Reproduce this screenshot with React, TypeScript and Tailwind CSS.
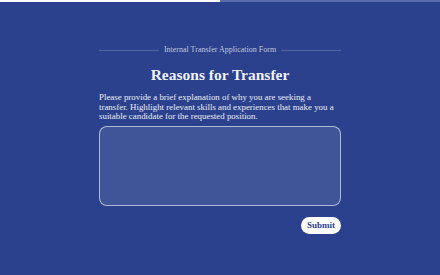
import React from "react";

const App: React.FC = () => {
  return (
    <div
      className="w-[440px] h-[275px] bg-[#2b418d] text-white overflow-hidden"
      style={{ fontFamily: '"Liberation Serif", "DejaVu Serif", serif' }}
    >
      {/* progress */}
      <div className="flex h-[2px] w-full">
        <div className="w-1/2 bg-white" />
        <div className="w-1/2 bg-[#5a6ead]" />
      </div>

      <div className="mx-auto w-[242px] pt-[42px]">
        <div className="flex items-center gap-[5px]">
          <div className="h-px flex-1 bg-white/20" />
          <span className="text-[8px] leading-[12px] text-white/70">
            Internal Transfer Application Form
          </span>
          <div className="h-px flex-1 bg-white/20" />
        </div>

        <h1 className="mt-[8px] text-center text-[15.5px] font-bold leading-[22px] text-white/95">
          Reasons for Transfer
        </h1>

        <p className="mt-[7px] text-[8.9px] leading-[9.6px] text-white/90">
          Please provide a brief explanation of why you are seeking a transfer.
          Highlight relevant skills and experiences that make you a suitable
          candidate for the requested position.
        </p>

        <textarea className="mt-[4px] block h-[80px] w-full resize-none rounded-[8px] border border-white/60 bg-white/10 outline-none" />

        <div className="mt-[11px] flex justify-end">
          <button className="h-[17px] rounded-full bg-white px-[6px] text-[9px] font-bold leading-none text-[#2b418d]">
            Submit
          </button>
        </div>
      </div>
    </div>
  );
};

export default App;
